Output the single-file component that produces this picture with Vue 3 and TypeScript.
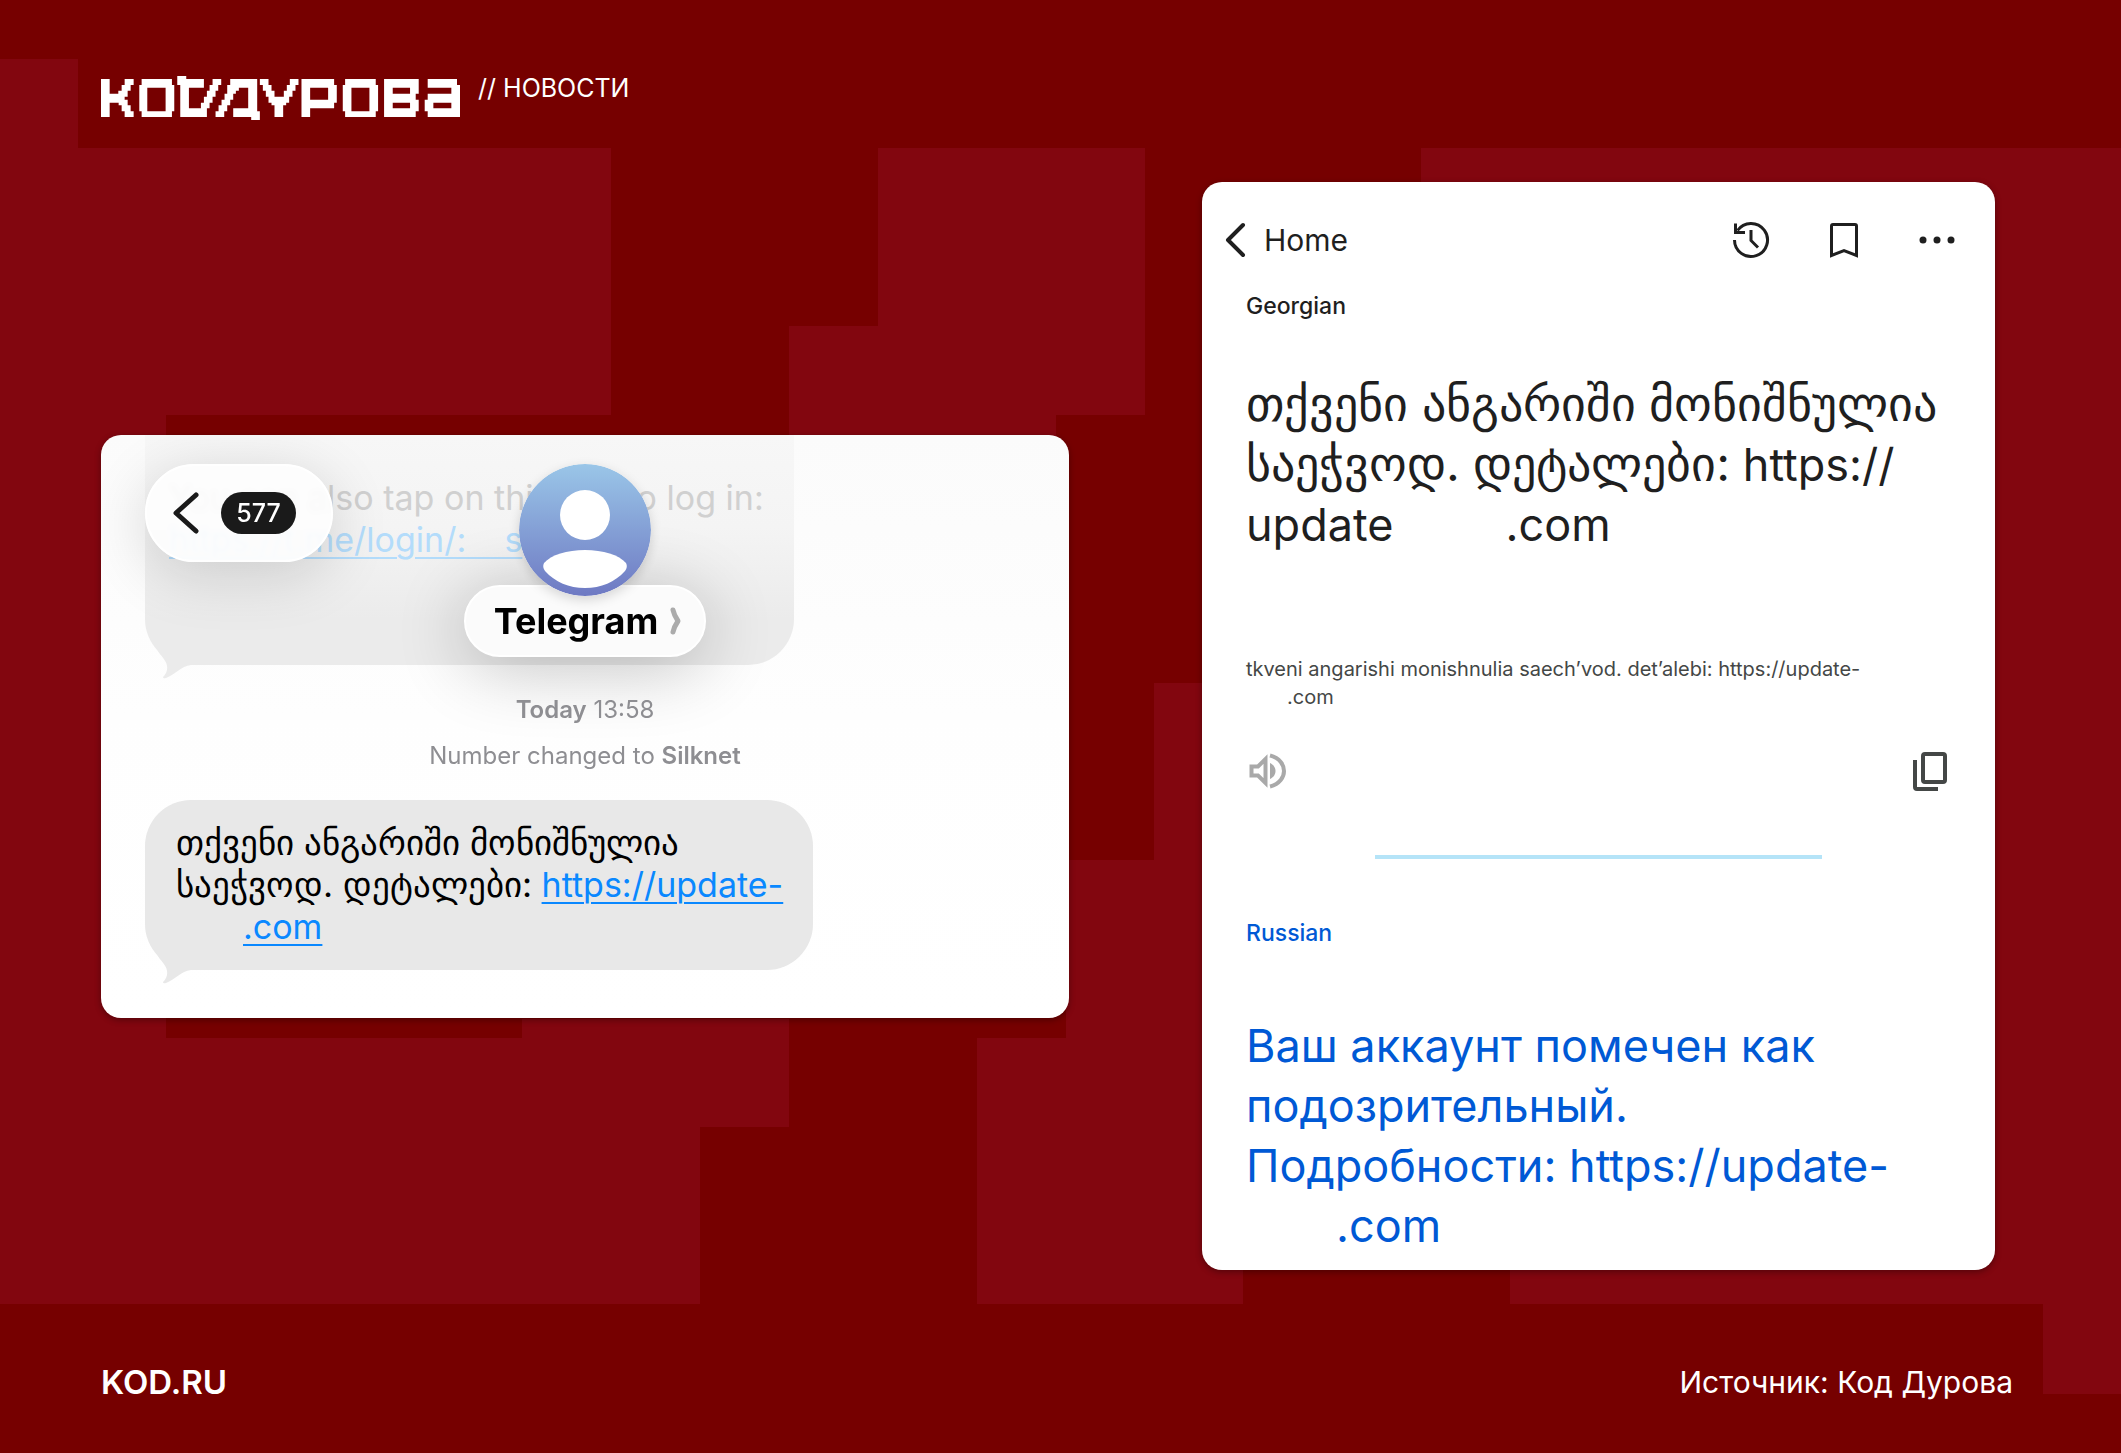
<script setup lang="ts">
interface Message {
  lines: string[]
}

const unread: number = 577
const georgian: Message = {
  lines: ['თქვენი ანგარიში მონიშნულია', 'საეჭვოდ. დეტალები:'],
}
</script>

<template>
  <div class="stage">
    <svg class="backdrop" viewBox="0 0 2121 1453" preserveAspectRatio="none" aria-hidden="true">
      <path
        fill="#82060f"
        d="M0 59H78V148H611V415H166V1038H522V1019H789V1127H700V1304H0Z
           M878 148H1145V415H1056V500H789V326H878Z
           M1421 148H2121V1394H2043V1304H1510V1260H1243V1304H977V1038H1066V860H1154V683H1421Z"
      />
    </svg>

    <header class="masthead">
      <a class="logo" href="#" aria-label="Код Дурова">
        <svg viewBox="15 17 1078 132" width="359" height="44" fill="#fff" fill-rule="evenodd" shape-rendering="geometricPrecision">
          <path d="M15 26H41V70H67V61H77V44H86V26H113V44H104V61H95V79H86V88H95V105H104V123H113V140H86V123H77V105H68V97H41V140H15Z" />
          <path d="M137 26H228V44H235V123H228V140H137V123H130V44H137ZM154 52V123H209V52Z" />
          <path d="M244 17H271V26H324V52H279V114H315V97H324V79H333V61H341V44H350V26H376V44H367V61H359V79H350V97H341V114H333V140H253V44H244Z" />
          <path d="M403 26H484V123H492V149H466V140H412V114H457V52H429V61H420V70H412V88H403V105H394V123H385V140H359V123H368V105H377V88H386V70H394V44H403Z" />
          <path d="M492 26H518V44H527V61H536V79H564V61H573V44H582V26H608V44H599V61H590V79H580V97H571V105H562V140H536V105H527V97H518V79H510V61H501V44H492Z" />
          <path d="M617 26H715V44H723V97H715V114H643V140H617ZM643 52V88H697V52Z" />
          <path d="M748 26H840V44H847V123H840V140H748V123H741V44H748ZM767 52V123H821V52Z" />
          <path d="M865 26H969V70H960V88H969V123H960V140H865ZM891 52V70H943V52ZM891 97V114H943V97Z" />
          <path d="M996 26H1084V44H1093V140H996V123H987V88H996V70H1067V52H996ZM1013 97V114H1067V97Z" />
        </svg>
      </a>
      <span class="section">// НОВОСТИ</span>
    </header>

    <main class="cards">
      <section class="card chat">
        <div class="bubble previous">
          <p class="msg">
            You can also tap on this link to log in:<br />
            <a href="#">https://t.me/login/:&nbsp;&nbsp;&nbsp;&nbsp;s</a>
          </p>
          <svg class="tail" viewBox="0 0 50 32" width="50" height="32" fill="#ebebeb">
            <path d="M12 0C15 7 21 10 22 17C23 22 20 26 18 28Q18 30 21 29C30 26 36 17 46 16V0Z" />
          </svg>
        </div>

        <button class="back" type="button" aria-label="Back">
          <svg viewBox="0 0 28 44" width="28" height="44" fill="none" stroke="#1a1a1a" stroke-width="5" stroke-linecap="round" stroke-linejoin="round">
            <path d="M23 4L3 22L23 40" />
          </svg>
          <span class="count">{{ unread }}</span>
        </button>

        <div class="contact">
          <svg class="avatar" viewBox="0 0 132 132" width="132" height="132">
            <defs>
              <linearGradient id="sky" x1="0" y1="0" x2="0" y2="1">
                <stop offset="0" stop-color="#9ac6e8" />
                <stop offset="1" stop-color="#6e79c3" />
              </linearGradient>
            </defs>
            <circle cx="66" cy="66" r="66" fill="url(#sky)" />
            <circle cx="66" cy="51" r="25" fill="#fff" />
            <path fill="#fff" d="M25 99C32 91 48 86 66 86S100 91 107 99Q109 103 106 107C96 118 82 124 66 124S36 118 26 107Q23 103 25 99Z" />
          </svg>
          <button class="name" type="button">
            Telegram
            <svg viewBox="0 0 12 28" width="12" height="28" fill="none" stroke="#ababab" stroke-width="5" stroke-linecap="round" stroke-linejoin="round">
              <path d="M3 3Q4 8 8 14Q4 20 3 25" />
            </svg>
          </button>
        </div>

        <p class="stamp"><b>Today</b> 13:58</p>
        <p class="stamp">Number changed to <b>Silknet</b></p>

        <div class="bubble current">
          <p class="msg">
            <span class="ka">{{ georgian.lines[0] }}</span><br />
            <span class="ka">{{ georgian.lines[1] }}</span>&nbsp;<a href="#">https://update-</a><br />
            <span class="redacted"></span><a href="#">.com</a>
          </p>
          <svg class="tail" viewBox="0 0 50 32" width="50" height="32" fill="#e8e8e8">
            <path d="M12 0C15 7 21 10 22 17C23 22 20 26 18 28Q18 30 21 29C30 26 36 17 46 16V0Z" />
          </svg>
        </div>
      </section>

      <section class="card translate">
        <nav class="bar">
          <a class="home" href="#">
            <svg viewBox="0 0 22 36" width="22" height="36" fill="none" stroke="#1f1f1f" stroke-width="4" stroke-linecap="round" stroke-linejoin="round">
              <path d="M19 3L4 18L19 33" />
            </svg>
            Home
          </a>
          <button class="icon" type="button" aria-label="History">
            <svg viewBox="0 0 40 40" width="40" height="40" fill="none" stroke="#1f1f1f" stroke-width="3">
              <path d="M3.500 20A16.500 16.500 0 1 0 6.500 10.500" />
              <path d="M4.500 3.500V12.500H14" />
              <path d="M20 10V20.500L27 27.500" />
            </svg>
          </button>
          <button class="icon" type="button" aria-label="Saved">
            <svg viewBox="0 0 40 40" width="40" height="40" fill="none" stroke="#1f1f1f" stroke-width="3">
              <path d="M7.500 35.500V6Q7.500 4.500 9 4.500H31Q32.500 4.500 32.500 6V35.500L20 30.500Z" />
            </svg>
          </button>
          <button class="icon" type="button" aria-label="More">
            <svg viewBox="0 0 40 40" width="40" height="40" fill="#1f1f1f">
              <circle cx="6" cy="20" r="3.500" />
              <circle cx="20" cy="20" r="3.500" />
              <circle cx="34" cy="20" r="3.500" />
            </svg>
          </button>
        </nav>

        <div class="body">
          <h2 class="lang">Georgian</h2>
          <p class="big source">
            <span class="ka">{{ georgian.lines[0] }}</span><br />
            <span class="ka">{{ georgian.lines[1] }}</span> https://<br />
            update<span class="redacted"></span>.com
          </p>
          <p class="translit">
            tkveni angarishi monishnulia saech’vod. det’alebi: https://update-<br />
            <span class="redacted"></span>.com
          </p>
          <div class="tools">
            <button class="icon" type="button" aria-label="Listen">
              <svg viewBox="0 0 40 40" width="40" height="40">
                <path d="M5.500 15.500H12L19.500 8V32L12 24.500H5.500Z" fill="none" stroke="#a9a9a9" stroke-width="4" />
                <path d="M24 12C28 14 29.500 17 29.500 20S28 26 24 28Z" fill="#a9a9a9" />
                <path d="M24 4.500C34 7 38 14 38 20S34 33 24 35.500" fill="none" stroke="#a9a9a9" stroke-width="4" />
              </svg>
            </button>
            <button class="icon" type="button" aria-label="Copy">
              <svg viewBox="0 0 40 40" width="40" height="40" fill="none" stroke="#444746" stroke-width="4">
                <rect x="12" y="3" width="22" height="28" rx="2" />
                <path d="M4 9V36Q4 38 6 38H27" />
              </svg>
            </button>
          </div>
          <hr />
          <h2 class="lang ru">Russian</h2>
          <p class="big result">
            Ваш аккаунт помечен как<br />
            подозрительный.<br />
            Подробности: https://update-<br />
            <span class="redacted"></span>.com
          </p>
        </div>
      </section>
    </main>

    <footer class="foot">
      <a class="site" href="#">KOD.RU</a>
      <span class="credit">Источник: Код Дурова</span>
    </footer>
  </div>
</template>

<style>
body {
  margin: 0;
  background: #760000;
}
</style>

<style scoped>
.stage {
  position: relative;
  isolation: isolate;
  display: flex;
  flex-direction: column;
  min-height: 100vh;
  font-family: Inter, "Liberation Sans", sans-serif;
  color: #fff;
  background: #760000;
}
.backdrop {
  position: absolute;
  inset: 0;
  z-index: -1;
  width: 100%;
  height: 100%;
}
p,
h2 {
  margin: 0;
}
a {
  color: inherit;
  text-decoration: none;
}
button {
  border: 0;
  padding: 0;
  background: none;
  font: inherit;
  color: inherit;
}
svg {
  display: block;
}
.masthead {
  display: flex;
  align-items: flex-start;
  gap: 18px;
  box-sizing: border-box;
  height: 182px;
  padding: 76px 101px 0;
}
.section {
  font-size: 25px;
  line-height: 24px;
}
.cards {
  flex: 1;
  display: grid;
  grid-template-columns: minmax(0, 968fr) minmax(0, 793fr);
  align-items: center;
  gap: 133px;
  padding: 0 126px 0 101px;
}
.card {
  border-radius: 20px;
  background: #fff;
  box-shadow: 0 2px 6px rgba(0, 0, 0, 0.35);
}

.chat {
  position: relative;
  padding: 0 44px 48px;
  background: linear-gradient(#fbfbfb, #fefefe 280px, #fff);
  overflow: hidden;
  color: #000;
}
.bubble {
  position: relative;
  box-sizing: border-box;
  padding: 22px 20px 22px 31px;
  border-radius: 46px;
  background: #e8e8e8;
}
.msg {
  font-size: 34px;
  line-height: 42px;
  white-space: nowrap;
}
.msg a {
  color: #0a88ff;
  text-decoration: underline;
  text-decoration-thickness: 2px;
  text-underline-offset: 5px;
}
.msg .ka {
  font-size: 35px;
  line-height: 36px;
}
.previous {
  width: 649px;
  height: 230px;
  padding-top: 42px;
  padding-left: 24px;
  border-radius: 0 0 46px 46px;
  background: linear-gradient(#f7f7f7, #f4f4f4 40%, #ebebeb 80%);
  color: #d0d0d0;
}
.previous a {
  color: #b3dcfb;
}
.tail {
  position: absolute;
  left: 0;
  bottom: -16px;
}
.current {
  width: 668px;
  margin-top: 27px;
}
.current .redacted {
  display: inline-block;
  width: 67px;
}
.back {
  position: absolute;
  top: 29px;
  left: 44px;
  display: flex;
  align-items: center;
  gap: 20px;
  box-sizing: border-box;
  width: 188px;
  height: 98px;
  padding-left: 26px;
  border: 2px solid #fff;
  border-radius: 49px;
  background: rgba(253, 253, 253, 0.92);
  backdrop-filter: blur(2px);
  box-shadow: 0 12px 60px rgba(0, 0, 0, 0.16);
}
.count {
  width: 75px;
  border-radius: 21px;
  background: #1a1a1a;
  color: #fff;
  font-size: 25px;
  font-weight: 500;
  line-height: 42px;
}
.contact {
  position: absolute;
  top: 29px;
  left: 0;
  right: 0;
  display: flex;
  flex-direction: column;
  align-items: center;
}
.avatar {
  z-index: 1;
  border-radius: 50%;
  box-shadow: 0 4px 12px rgba(0, 0, 0, 0.15);
}
.name {
  display: flex;
  align-items: center;
  gap: 12px;
  height: 72px;
  margin-top: -11px;
  padding: 0 22px 0 28px;
  border: 2px solid #fff;
  box-sizing: border-box;
  border-radius: 36px;
  background: #fbfbfb;
  box-shadow: 0 10px 70px rgba(0, 0, 0, 0.24);
  font-size: 36px;
  font-weight: 700;
}
.stamp {
  position: relative;
  margin-top: 12px;
  font-size: 24px;
  line-height: 34px;
  text-align: center;
  color: #8e8e92;
}
.stamp b {
  font-weight: 600;
}
.contact + .stamp {
  margin-top: 28px;
}

.translate {
  color: #1f1f1f;
}
.bar {
  display: flex;
  align-items: center;
  gap: 53px;
  padding: 38px 38px 0 22px;
}
.home {
  display: flex;
  align-items: center;
  gap: 18px;
  margin-right: auto;
  font-size: 30px;
  line-height: 40px;
}
.body {
  padding: 32px 44px 14px;
}
.lang {
  font-size: 23px;
  font-weight: 500;
  line-height: 28px;
}
.big {
  font-size: 45px;
  line-height: 60px;
  white-space: nowrap;
}
.big .ka {
  font-size: 48px;
  line-height: 48px;
}
.redacted {
  display: inline-block;
}
.source {
  margin-top: 55px;
}
.source .redacted {
  width: 112px;
}
.translit {
  margin-top: 100px;
  font-size: 20px;
  line-height: 28px;
  white-space: nowrap;
  color: #444746;
}
.translit .redacted {
  width: 41px;
}
.tools {
  display: flex;
  justify-content: space-between;
  margin-top: 40px;
}
hr {
  width: 447px;
  height: 4px;
  margin: 64px auto 60px;
  border: 0;
  background: #b5e4f8;
}
.ru {
  color: #0059d5;
}
.result {
  margin-top: 69px;
  color: #0059d5;
}
.result .redacted {
  width: 90px;
}

.foot {
  display: flex;
  justify-content: space-between;
  align-items: center;
  box-sizing: border-box;
  height: 183px;
  padding: 40px 108px 0 101px;
}
.site {
  font-size: 33px;
  font-weight: 600;
  line-height: 40px;
}
.credit {
  font-size: 30px;
  line-height: 40px;
}
</style>
